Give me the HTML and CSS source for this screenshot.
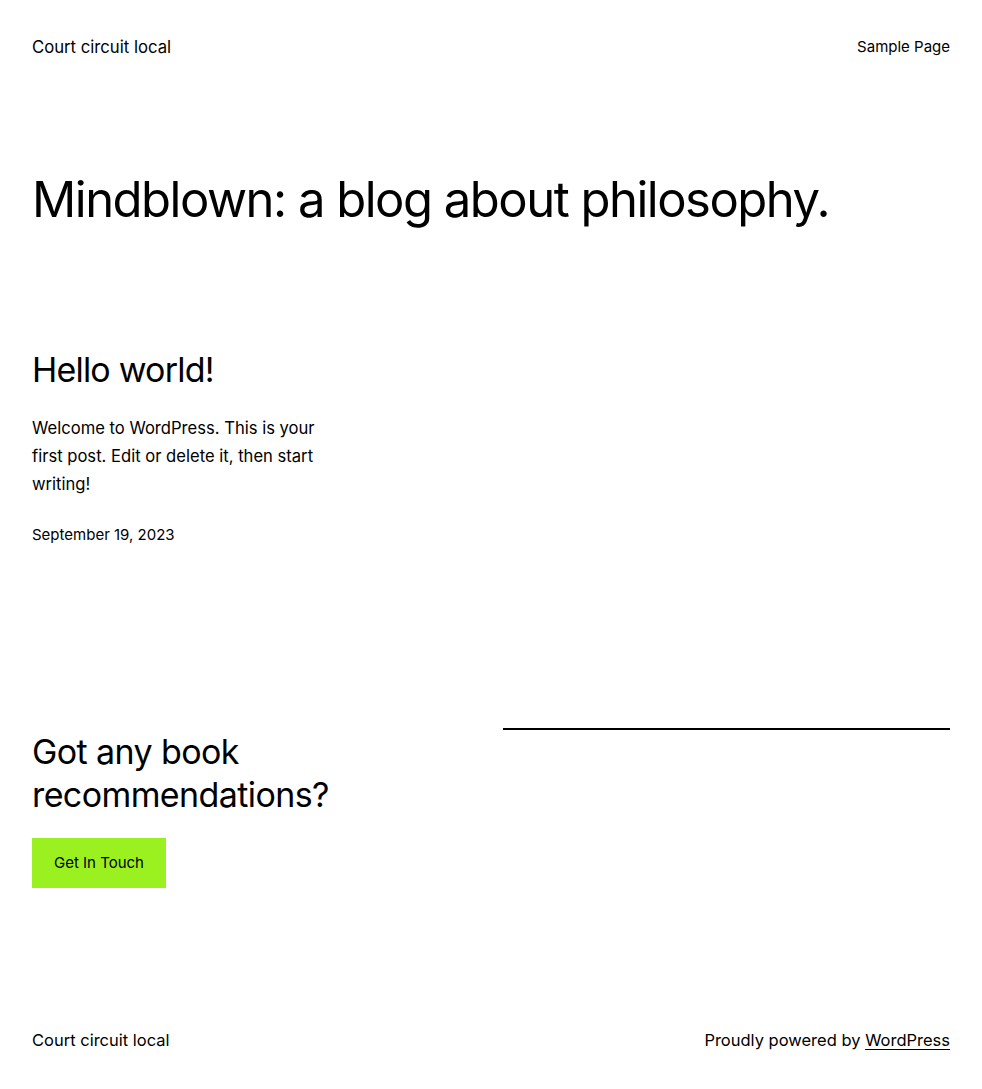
FILE: index.html
```html
<!DOCTYPE html>
<html lang="en">
<head>
<meta charset="utf-8">
<title>Court circuit local</title>
<link rel="stylesheet" href="styles.css">
</head>
<body>
<header class="site-header">
  <a class="site-title" href="#">Court circuit local</a>
  <nav class="site-nav"><a href="#">Sample Page</a></nav>
</header>
<main class="site-main">
  <h1 class="page-title">Mindblown: a blog about philosophy.</h1>
  <section class="posts">
    <article class="post">
      <h2 class="post-title">Hello world!</h2>
      <p class="post-excerpt">Welcome to WordPress. This is your first post. Edit or delete it, then start writing!</p>
      <time class="post-date">September 19, 2023</time>
    </article>
  </section>
  <section class="cta">
    <div class="cta-left">
      <h2 class="cta-title">Got any book recommendations?</h2>
      <a class="cta-button" href="#">Get In Touch</a>
    </div>
    <div class="cta-right">
      <hr class="cta-rule">
    </div>
  </section>
</main>
<footer class="site-footer">
  <span class="footer-title">Court circuit local</span>
  <span class="footer-credit">Proudly powered by <a href="#">WordPress</a></span>
</footer>
</body>
</html>
```

FILE: styles.css
```css
* { box-sizing: border-box; }
html, body { margin: 0; padding: 0; background: #fff; }
body {
  font-family: Inter, "Noto Sans", "Liberation Sans", sans-serif;
  color: #000;
  padding: 0 32px;
  -webkit-font-smoothing: antialiased;
}
a { color: #000; }
.site-header {
  display: flex;
  justify-content: space-between;
  align-items: center;
  padding-top: 33px;
  height: 61px;
}
.site-title {
  font-size: 16.7px;
  line-height: 28px;
  text-decoration: none;
}
.site-nav a {
  font-size: 15px;
  line-height: 28px;
  text-decoration: none;
}
.page-title {
  margin: 108px 0 0;
  font-weight: 400;
  font-size: 49px;
  line-height: 62px;
  letter-spacing: -1.5px;
}
.posts {
  display: grid;
  grid-template-columns: repeat(3, 1fr);
  gap: 20px;
  margin-top: 116px;
}
.post-title {
  margin: 0;
  font-weight: 400;
  font-size: 34px;
  line-height: 46px;
  letter-spacing: -0.8px;
}
.post-excerpt {
  margin: 21px 0 0;
  font-size: 16.6px;
  line-height: 28px;
}
.post-date {
  display: block;
  margin-top: 25px;
  font-size: 15px;
  line-height: 24px;
}
.cta {
  display: grid;
  grid-template-columns: 1fr 1fr;
  gap: 24px;
  margin-top: 181px;
}
.cta-title {
  margin: 2px 0 0;
  font-weight: 400;
  font-size: 34px;
  line-height: 43px;
  letter-spacing: -0.6px;
}
.cta-button {
  display: inline-block;
  margin-top: 22px;
  background: #9bf11f;
  height: 50px;
  line-height: 50px;
  padding: 0 22px;
  font-size: 15px;
  text-decoration: none;
}
.cta-rule {
  margin: 0;
  border: 0;
  border-top: 2px solid #000;
}
.site-footer {
  display: flex;
  justify-content: space-between;
  align-items: center;
  margin-top: 138px;
  height: 28px;
  font-size: 16.5px;
  line-height: 28px;
}
.footer-credit a { text-decoration: underline; text-underline-offset: 3px; }
```
